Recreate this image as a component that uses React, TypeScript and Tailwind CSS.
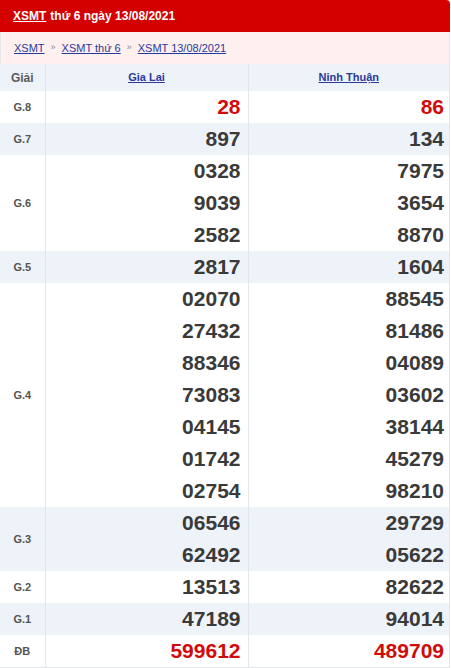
const rows: { label: string; a: string[]; b: string[]; red?: boolean }[] = [
  { label: 'G.8', a: ['28'], b: ['86'], red: true },
  { label: 'G.7', a: ['897'], b: ['134'] },
  { label: 'G.6', a: ['0328', '9039', '2582'], b: ['7975', '3654', '8870'] },
  { label: 'G.5', a: ['2817'], b: ['1604'] },
  {
    label: 'G.4',
    a: ['02070', '27432', '88346', '73083', '04145', '01742', '02754'],
    b: ['88545', '81486', '04089', '03602', '38144', '45279', '98210'],
  },
  { label: 'G.3', a: ['06546', '62492'], b: ['29729', '05622'] },
  { label: 'G.2', a: ['13513'], b: ['82622'] },
  { label: 'G.1', a: ['47189'], b: ['94014'] },
  { label: 'ĐB', a: ['599612'], b: ['489709'], red: true },
];

const NumberCell = ({ nums, red, last }: { nums: string[]; red?: boolean; last?: boolean }) => (
  <td className={`border-l border-[#e3e6ea] align-top ${last ? 'pr-[5px]' : 'pr-[7px]'}`}>
    {nums.map((n) => (
      <div
        key={n}
        className={`h-8 text-right text-[21px] font-bold leading-8 ${red ? 'text-[#d10a0a]' : 'text-[#3a3a3a]'}`}
      >
        {n}
      </div>
    ))}
  </td>
);

export default function App() {
  return (
    <div className="w-[450px] bg-white font-['Liberation_Sans',Arial,sans-serif]">
      <div className="flex h-8 items-center rounded-tr-[4px] bg-[#d40000] px-[13px] text-[12px] font-bold text-white">
        <a href="#" className="underline">XSMT</a>
        <span className="ml-[4px]">thứ 6 ngày 13/08/2021</span>
      </div>
      <div className="flex h-8 items-center gap-[6px] border-x border-[#e6e6e6] bg-[#fdf0ef] px-[13px] text-[11px] text-[#2a3a9c]">
        <a href="#" className="underline">XSMT</a>
        <span className="text-[9px] text-[#888]">»</span>
        <a href="#" className="underline">XSMT thứ 6</a>
        <span className="text-[9px] text-[#888]">»</span>
        <a href="#" className="underline">XSMT 13/08/2021</a>
      </div>
      <table className="w-full table-fixed border-collapse border-b border-r border-[#e3e6ea]">
        <colgroup>
          <col className="w-[45px]" />
          <col className="w-[203px]" />
          <col />
        </colgroup>
        <thead>
          <tr className="h-[27px] bg-[#eef2f9]">
            <th className="text-center text-[12px] font-bold text-[#5a5a5a]">Giải</th>
            <th className="border-l border-[#e3e6ea] text-center text-[11px] font-bold text-[#2a3a9c]">
              <a href="#" className="underline">Gia Lai</a>
            </th>
            <th className="border-l border-[#e3e6ea] text-center text-[11px] font-bold text-[#2a3a9c]">
              <a href="#" className="underline">Ninh Thuận</a>
            </th>
          </tr>
        </thead>
        <tbody>
          {rows.map((r, i) => (
            <tr key={r.label} className={i % 2 === 1 ? 'bg-[#eef2f9]' : 'bg-white'}>
              <td className="text-center align-middle text-[11px] font-bold text-[#555]">{r.label}</td>
              <NumberCell nums={r.a} red={r.red} />
              <NumberCell nums={r.b} red={r.red} last />
            </tr>
          ))}
        </tbody>
      </table>
    </div>
  );
}
